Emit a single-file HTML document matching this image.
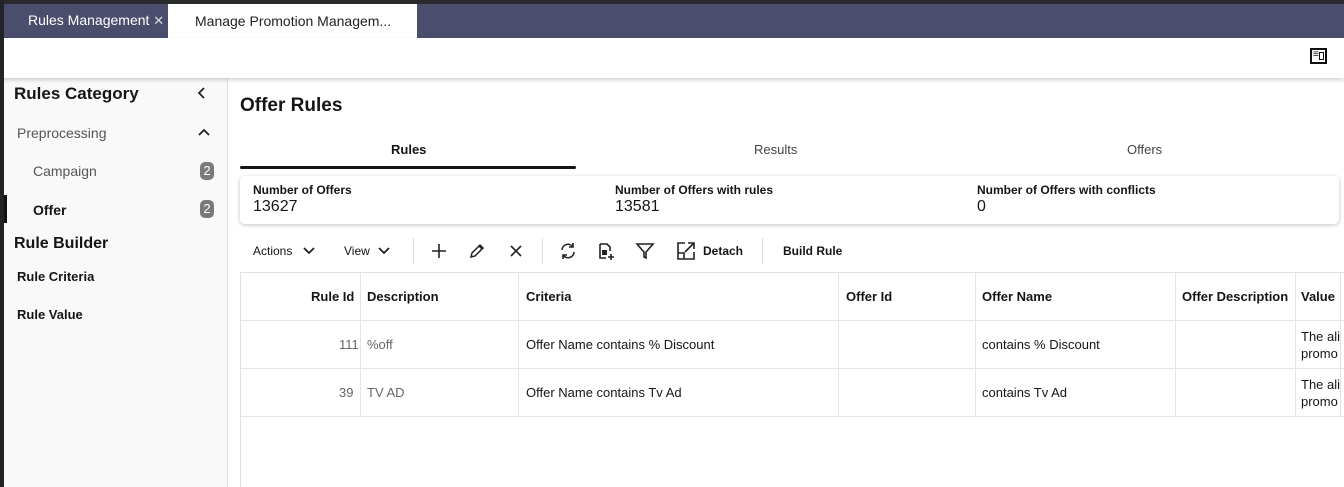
<!DOCTYPE html>
<html><head><meta charset="utf-8"><style>
*{box-sizing:border-box;margin:0;padding:0}
body{width:1344px;height:487px;overflow:hidden;position:relative;font-family:"Liberation Sans",sans-serif;background:#fff;color:#161513}
.a{position:absolute;white-space:nowrap}
.b{font-weight:bold}
svg{position:absolute}
</style></head><body>
<div class="a" style="left:0;top:0;width:1344px;height:4px;background:#2a2a2c"></div>
<div class="a" style="left:0;top:4px;width:1344px;height:34px;background:#4a4d6c"></div>
<div class="a" style="left:28px;top:12px;font-size:14px;color:#fff">Rules Management <span style="font-size:13px;color:#ddd">✕</span></div>
<div class="a" style="left:168px;top:4px;width:249px;height:34px;background:#fff"></div>
<div class="a" style="left:195px;top:13px;font-size:14px;color:#222">Manage Promotion Managem...</div>
<div class="a" style="left:0;top:38px;width:1344px;height:40px;background:#fff;box-shadow:0 2px 4px rgba(0,0,0,.18);z-index:2"></div>
<div class="a" style="left:1310px;top:48px;width:17px;height:16px;border:2px solid #111;z-index:3"></div>
<div class="a" style="left:1313px;top:49px;font-size:10px;line-height:12px;font-weight:bold;z-index:3">≡</div>
<div class="a" style="left:1319px;top:52px;width:5px;height:8px;border:1.5px solid #111;z-index:3"></div>
<div class="a" style="left:0;top:78px;width:228px;height:409px;background:#f9f9f9;border-right:1px solid #e2e2e2"></div>
<div class="a" style="left:0;top:0;width:4px;height:487px;background:#232325;z-index:4"></div>
<div class="a" style="left:4px;top:195px;width:3px;height:28px;background:#111"></div>
<div class="a b" style="left:14px;top:84px;font-size:17px">Rules Category</div>
<svg style="left:196px;top:86px" width="12" height="14"><path d="M8 2 L3 7 L8 12" fill="none" stroke="#222" stroke-width="1.8"/></svg>
<div class="a" style="left:17px;top:125px;font-size:14px;color:#555">Preprocessing</div>
<svg style="left:197px;top:127px" width="14" height="10"><path d="M2 8 L7 3 L12 8" fill="none" stroke="#222" stroke-width="1.8"/></svg>
<div class="a" style="left:33px;top:163px;font-size:14px;color:#555">Campaign</div>
<div class="a" style="left:200px;top:162px;width:14px;height:18px;border-radius:5px;background:#7a7a7a;color:#fff;font-size:13px;text-align:center;line-height:18px">2</div>
<div class="a b" style="left:33px;top:202px;font-size:14px">Offer</div>
<div class="a" style="left:200px;top:200px;width:14px;height:18px;border-radius:5px;background:#7a7a7a;color:#fff;font-size:13px;text-align:center;line-height:18px">2</div>
<div class="a b" style="left:14px;top:235px;font-size:16px">Rule Builder</div>
<div class="a b" style="left:17px;top:269px;font-size:13px">Rule Criteria</div>
<div class="a b" style="left:17px;top:307px;font-size:13px">Rule Value</div>

<div class="a b" style="left:240px;top:95px;font-size:19px">Offer Rules</div>
<div class="a b" style="left:391px;top:142px;font-size:13px">Rules</div>
<div class="a" style="left:754px;top:142px;font-size:13px;color:#444">Results</div>
<div class="a" style="left:1127px;top:142px;font-size:13px;color:#444">Offers</div>
<div class="a" style="left:240px;top:166px;width:336px;height:3px;background:#161513;border-radius:2px"></div>
<div class="a" style="left:240px;top:176px;width:1099px;height:48px;background:#fff;border-radius:5px;box-shadow:0 1px 4px rgba(0,0,0,.25)"></div>
<div class="a b" style="left:253px;top:183px;font-size:12px">Number of Offers</div>
<div class="a" style="left:253px;top:198px;font-size:16px">13627</div>
<div class="a b" style="left:615px;top:183px;font-size:12px">Number of Offers with rules</div>
<div class="a" style="left:615px;top:198px;font-size:16px">13581</div>
<div class="a b" style="left:977px;top:183px;font-size:12px">Number of Offers with conflicts</div>
<div class="a" style="left:977px;top:198px;font-size:16px">0</div>

<div class="a" style="left:253px;top:244px;font-size:12px">Actions</div>
<svg style="left:302px;top:245px" width="14" height="10"><path d="M2 3 L7 8 L12 3" fill="none" stroke="#222" stroke-width="1.8"/></svg>
<div class="a" style="left:344px;top:244px;font-size:12px">View</div>
<div class="a" style="left:413px;top:238px;width:1px;height:26px;background:#ddd"></div>
<svg style="left:430px;top:242px" width="18" height="18"><path d="M9 2V16M2 9H16" stroke="#222" stroke-width="1.6"/></svg>
<svg style="left:377px;top:245px" width="14" height="10"><path d="M2 3 L7 8 L12 3" fill="none" stroke="#222" stroke-width="1.8"/></svg>
<svg style="left:468px;top:242px" width="18" height="18"><path d="M3 15L4 11L12 3L15 6L7 14Z M11 4L14 7" fill="none" stroke="#222" stroke-width="1.5"/></svg>
<svg style="left:508px;top:243px" width="16" height="16"><path d="M3 3L13 13M13 3L3 13" stroke="#222" stroke-width="1.6"/></svg>
<div class="a" style="left:542px;top:238px;width:1px;height:26px;background:#ddd"></div>
<svg style="left:558px;top:241px" width="20" height="20"><path d="M4 9A6 6 0 0 1 15 6M16 11A6 6 0 0 1 5 14M15 2V6H11M5 18V14H9" fill="none" stroke="#222" stroke-width="1.6"/></svg>
<svg style="left:596px;top:241px" width="20" height="20"><path d="M4 3H11L14 6V10M4 3V17H10" fill="none" stroke="#222" stroke-width="1.6"/><rect x="6" y="9" width="5" height="5" fill="#222"/><path d="M15 13V19M12 16H18" stroke="#222" stroke-width="1.6"/></svg>
<svg style="left:635px;top:241px" width="20" height="20"><path d="M2 3H18L11 11V17L9 16V11Z" fill="none" stroke="#222" stroke-width="1.6"/></svg>
<svg style="left:676px;top:241px" width="20" height="20"><path d="M9 2H2V18H18V11M12 2H18V8M18 2L9 11M2 12H8V18" fill="none" stroke="#222" stroke-width="1.6"/></svg>
<div class="a b" style="left:703px;top:244px;font-size:12px">Detach</div>
<div class="a" style="left:762px;top:238px;width:1px;height:26px;background:#ddd"></div>
<div class="a b" style="left:783px;top:244px;font-size:12px">Build Rule</div>

<div class="a" style="left:240px;top:272px;width:1104px;height:215px;border-left:1px solid #e0e0e0;border-top:1px solid #e0e0e0"></div>
<div class="a" style="left:240px;top:320px;width:1104px;height:1px;background:#e4e4e4"></div>
<div class="a" style="left:240px;top:368px;width:1104px;height:1px;background:#e4e4e4"></div>
<div class="a" style="left:240px;top:416px;width:1104px;height:1px;background:#e4e4e4"></div>
<div class="a" style="left:1340px;top:272px;width:1px;height:145px;background:#e4e4e4"></div>
<div class="a" style="left:360px;top:272px;width:1px;height:145px;background:#e4e4e4"></div>
<div class="a" style="left:518px;top:272px;width:1px;height:145px;background:#e4e4e4"></div>
<div class="a" style="left:838px;top:272px;width:1px;height:145px;background:#e4e4e4"></div>
<div class="a" style="left:975px;top:272px;width:1px;height:145px;background:#e4e4e4"></div>
<div class="a" style="left:1175px;top:272px;width:1px;height:145px;background:#e4e4e4"></div>
<div class="a" style="left:1295px;top:272px;width:1px;height:145px;background:#e4e4e4"></div>
<div class="a b" style="left:311px;top:289px;font-size:13px">Rule Id</div>
<div class="a b" style="left:367px;top:289px;font-size:13px">Description</div>
<div class="a b" style="left:526px;top:289px;font-size:13px">Criteria</div>
<div class="a b" style="left:846px;top:289px;font-size:13px">Offer Id</div>
<div class="a b" style="left:982px;top:289px;font-size:13px">Offer Name</div>
<div class="a b" style="left:1182px;top:289px;font-size:13px">Offer Description</div>
<div class="a b" style="left:1301px;top:289px;font-size:13px">Value</div>
<div class="a" style="left:339px;top:337px;font-size:13px;color:#666">111</div>
<div class="a" style="left:367px;top:337px;font-size:13px;color:#666">%off</div>
<div class="a" style="left:526px;top:337px;font-size:13px">Offer Name contains % Discount</div>
<div class="a" style="left:982px;top:337px;font-size:13px">contains % Discount</div>
<div class="a" style="left:1301px;top:328px;font-size:13px;line-height:17px;width:39px;overflow:hidden">The ali<br>promo</div>
<div class="a" style="left:339px;top:385px;font-size:13px;color:#666">39</div>
<div class="a" style="left:367px;top:385px;font-size:13px;color:#666">TV AD</div>
<div class="a" style="left:526px;top:385px;font-size:13px">Offer Name contains Tv Ad</div>
<div class="a" style="left:982px;top:385px;font-size:13px">contains Tv Ad</div>
<div class="a" style="left:1301px;top:376px;font-size:13px;line-height:17px;width:39px;overflow:hidden">The ali<br>promo</div>
</body></html>
